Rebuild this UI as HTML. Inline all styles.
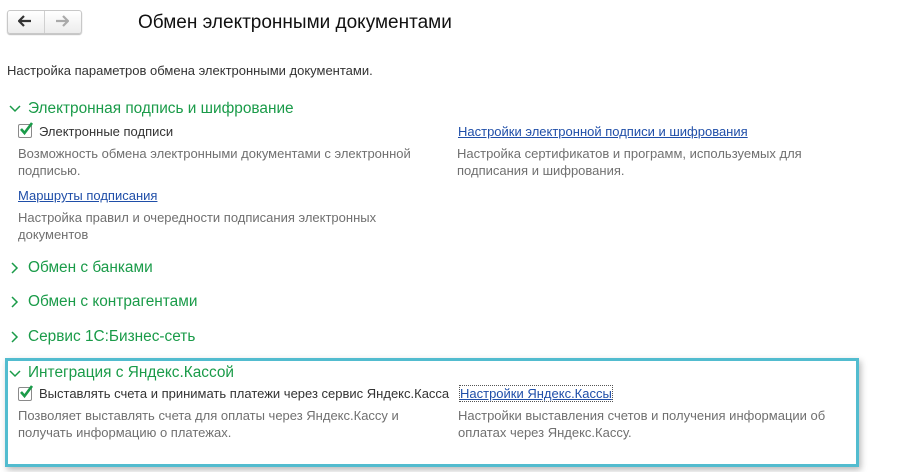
<!DOCTYPE html>
<html><head><meta charset="utf-8"><style>
body{margin:0;width:911px;height:472px;background:#fff;font-family:"Liberation Sans",Arial,sans-serif;position:relative;overflow:hidden}
.a{position:absolute;white-space:nowrap}
.t{font-size:13px;color:#333}
.g{font-size:13px;color:#707070;line-height:17px}
.h{font-size:15.4px;color:#1a9b49}
.l{font-size:13px;color:#1f4ea8;text-decoration:underline}
.cb{position:absolute;width:12px;height:12px;border:1px solid #8a8a8a;background:#fff;border-radius:2px}
</style></head><body>
<div class="a" style="left:7px;top:10px;width:73px;height:22px;border:1px solid #c8c8c8;border-radius:3px;background:linear-gradient(#fff,#ececec);box-shadow:0 1px 1px #bbb"></div>
<div class="a" style="left:44px;top:11px;width:1px;height:22px;background:#d0d0d0"></div>
<svg class="a" style="left:18px;top:15px" width="14" height="12"><path d="M1 6H13M6 1L1 6L6 11" stroke="#333" stroke-width="2.2" fill="none"/></svg>
<svg class="a" style="left:55px;top:15px" width="14" height="12"><path d="M1 6H13M8 1L13 6L8 11" stroke="#aaa" stroke-width="2.2" fill="none"/></svg>
<div class="a" style="left:138px;top:12px;font-size:19px;color:#111">Обмен электронными документами</div>
<div class="a t" style="left:7px;top:63px">Настройка параметров обмена электронными документами.</div>

<svg class="a" style="left:9px;top:104px" width="12" height="10"><path d="M1 2L6 7L11 2" stroke="#1a9b49" stroke-width="1.5" fill="none"/></svg>
<div class="a h" style="left:28px;top:100px">Электронная подпись и шифрование</div>
<div class="cb" style="left:18px;top:124px"></div>
<svg class="a" style="left:18px;top:121px" width="16" height="16"><path d="M3 8L6.5 12L14 2" stroke="#1a9b49" stroke-width="2.6" fill="none"/></svg>
<div class="a t" style="left:39px;top:124px">Электронные подписи</div>
<div class="a g" style="left:18px;top:145px">Возможность обмена электронными документами с электронной<br>подписью.</div>
<div class="a l" style="left:458px;top:124px">Настройки электронной подписи и шифрования</div>
<div class="a g" style="left:457px;top:145px">Настройка сертификатов и программ, используемых для<br>подписания и шифрования.</div>
<div class="a l" style="left:18px;top:188px">Маршруты подписания</div>
<div class="a g" style="left:18px;top:209px">Настройка правил и очередности подписания электронных<br>документов</div>

<svg class="a" style="left:10px;top:262px" width="10" height="12"><path d="M2 1L7 6L2 11" stroke="#1a9b49" stroke-width="1.5" fill="none"/></svg>
<div class="a h" style="left:28px;top:259px">Обмен с банками</div>
<svg class="a" style="left:10px;top:296px" width="10" height="12"><path d="M2 1L7 6L2 11" stroke="#1a9b49" stroke-width="1.5" fill="none"/></svg>
<div class="a h" style="left:28px;top:293px">Обмен с контрагентами</div>
<svg class="a" style="left:10px;top:331px" width="10" height="12"><path d="M2 1L7 6L2 11" stroke="#1a9b49" stroke-width="1.5" fill="none"/></svg>
<div class="a h" style="left:28px;top:328px">Сервис 1С:Бизнес-сеть</div>

<div class="a" style="left:5px;top:358px;width:848px;height:103px;border:3px solid #52bccf;box-shadow:2px 3px 6px #bbb"></div>
<svg class="a" style="left:9px;top:369px" width="12" height="10"><path d="M1 2L6 7L11 2" stroke="#1a9b49" stroke-width="1.5" fill="none"/></svg>
<div class="a h" style="left:28px;top:364px">Интеграция с Яндекс.Кассой</div>
<div class="cb" style="left:18px;top:387px"></div>
<svg class="a" style="left:18px;top:384px" width="16" height="16"><path d="M3 8L6.5 12L14 2" stroke="#1a9b49" stroke-width="2.6" fill="none"/></svg>
<div class="a t" style="left:39px;top:386px">Выставлять счета и принимать платежи через сервис Яндекс.Касса</div>
<div class="a g" style="left:18px;top:407px">Позволяет выставлять счета для оплаты через Яндекс.Кассу и<br>получать информацию о платежах.</div>
<div class="a l" style="left:460px;top:386px;outline:1px dotted #555">Настройки Яндекс.Кассы</div>
<div class="a g" style="left:458px;top:407px">Настройки выставления счетов и получения информации об<br>оплатах через Яндекс.Кассу.</div>
</body></html>
